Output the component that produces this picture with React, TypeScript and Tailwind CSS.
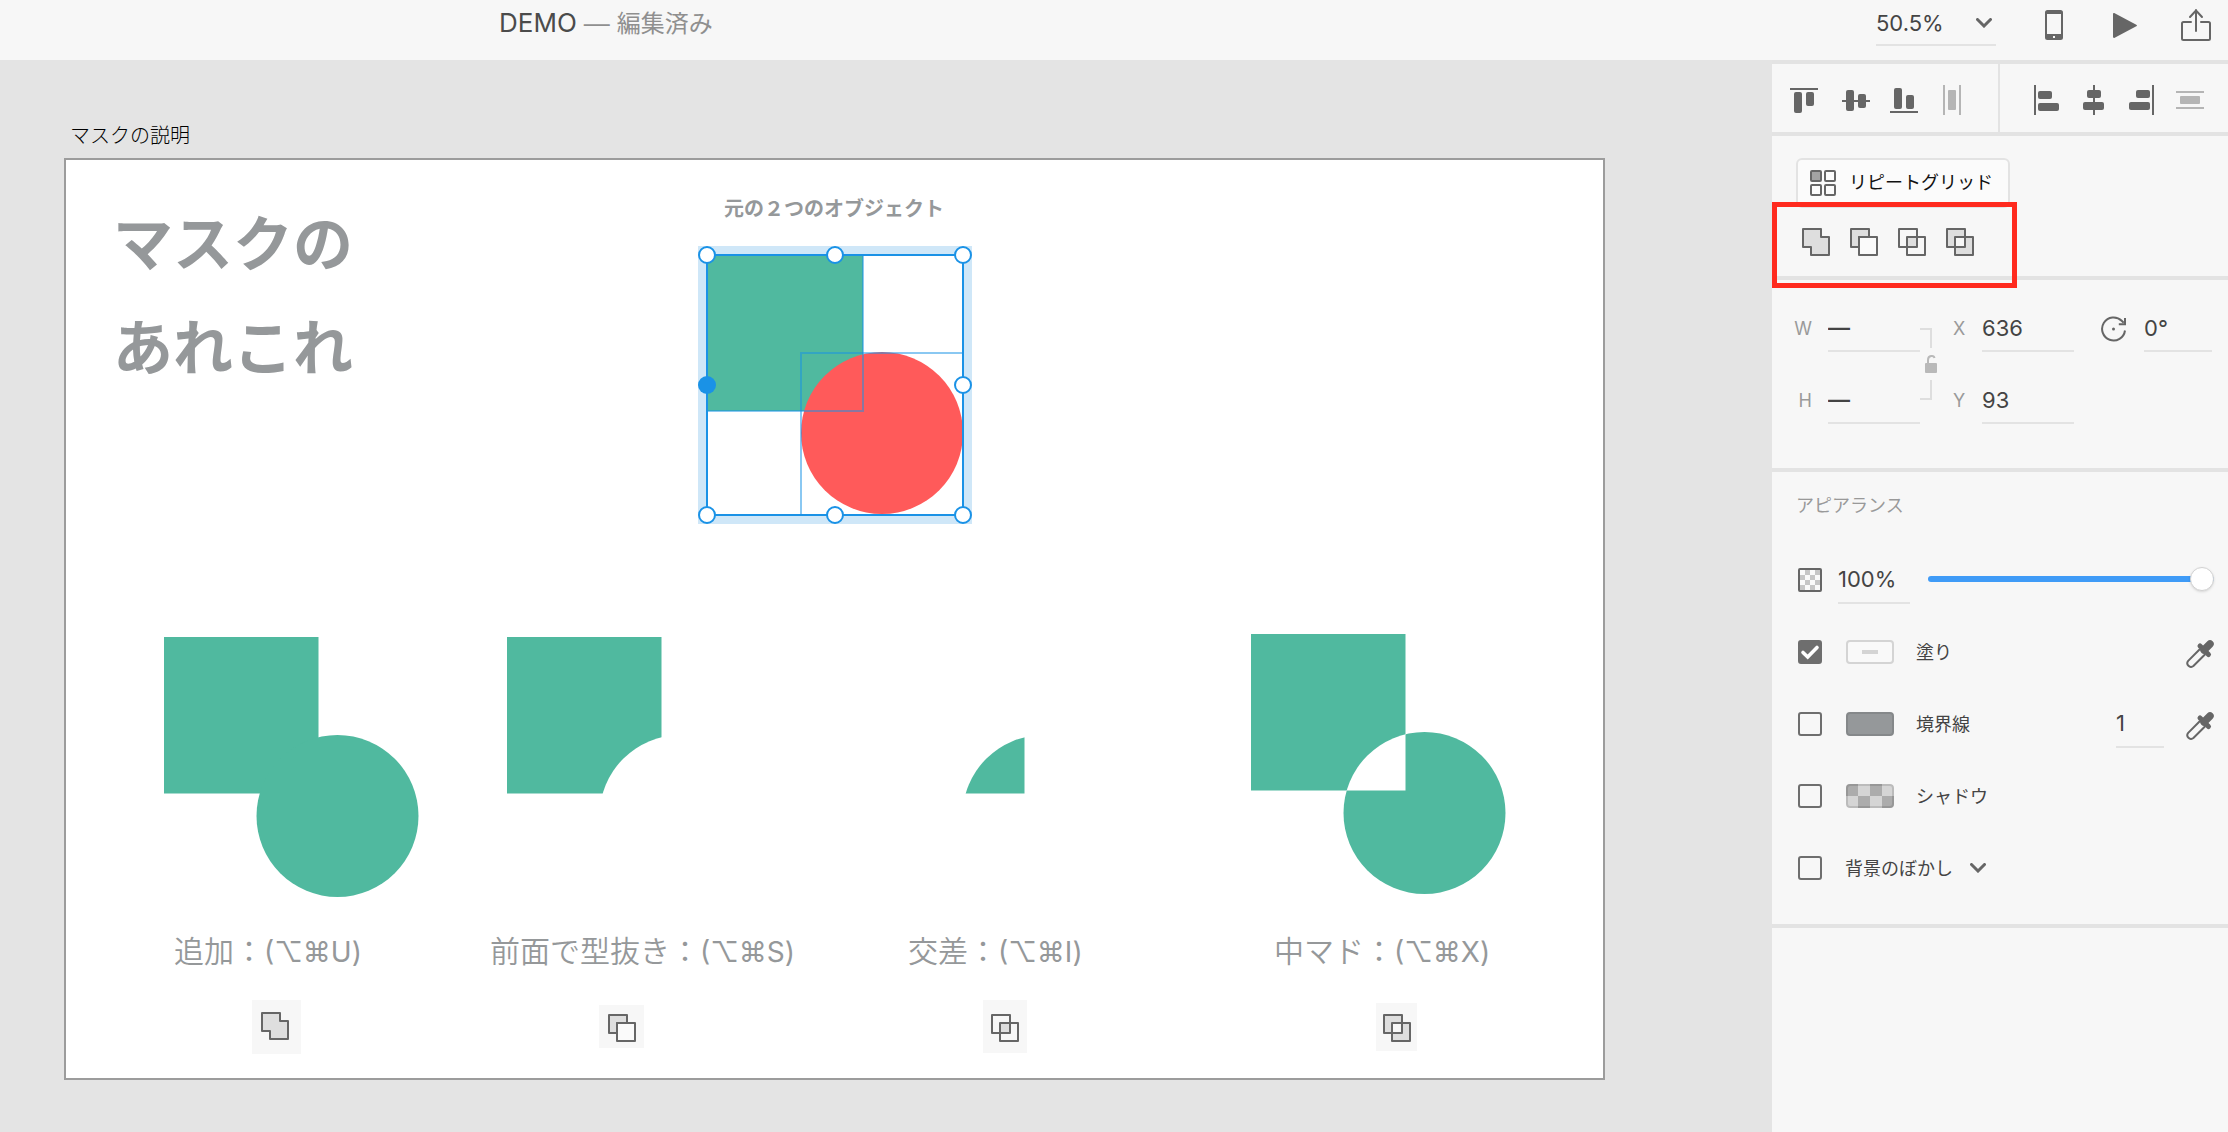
import { useState, type ReactNode } from "react";
import clsx from "clsx";

const GREEN = "#50b99f";
const INK = "#666666";

type BooleanOp = "add" | "subtract" | "intersect" | "exclude";

function BooleanIcon({ op }: { op: BooleanOp }) {
  const line = { stroke: INK, strokeWidth: 2, strokeLinejoin: "round" as const };
  return (
    <svg width="28" height="28" viewBox="0 0 28 28" aria-hidden="true">
      {op === "add" && <path d="M1 1h18v8h8v18H9v-8H1z" fill="#dedede" {...line} />}
      {op === "subtract" && (
        <>
          <path d="M1 1h18v8H9v10H1z" fill="#dedede" {...line} />
          <path d="M9 9h18v18H9z" fill="#fafafa" {...line} />
        </>
      )}
      {op === "intersect" && (
        <>
          <path d="M9 9h10v10H9z" fill="#dedede" />
          <path d="M1 1h18v18H1zM9 9h18v18H9z" fill="none" {...line} />
        </>
      )}
      {op === "exclude" && (
        <path d="M1 1h18v18H1zM9 9h18v18H9z" fill="#dedede" fillRule="evenodd" {...line} />
      )}
    </svg>
  );
}

const ops: BooleanOp[] = ["add", "subtract", "intersect", "exclude"];
const opNames: Record<BooleanOp, string> = {
  add: "追加",
  subtract: "前面で型抜き",
  intersect: "交差",
  exclude: "中マド",
};

function OpShape({ op }: { op: BooleanOp }) {
  return (
    <svg width="256" height="262" viewBox="0 0 256 262" aria-hidden="true">
      <defs>
        <mask id="outside-circle">
          <rect width="256" height="262" fill="#fff" />
          <circle cx="173.5" cy="179" r="81" fill="#000" />
        </mask>
        <clipPath id="inside-square">
          <rect width="154.5" height="156.5" />
        </clipPath>
        <mask id="outside-square">
          <rect width="256" height="262" fill="#fff" />
          <rect width="154.5" height="156.5" fill="#000" />
        </mask>
      </defs>
      {op === "add" && (
        <>
          <rect width="154.5" height="156.5" fill={GREEN} />
          <circle cx="173.5" cy="179" r="81" fill={GREEN} />
        </>
      )}
      {op === "subtract" && (
        <rect width="154.5" height="156.5" fill={GREEN} mask="url(#outside-circle)" />
      )}
      {op === "intersect" && (
        <circle cx="173.5" cy="179" r="81" fill={GREEN} clipPath="url(#inside-square)" />
      )}
      {op === "exclude" && (
        <>
          <rect width="154.5" height="156.5" fill={GREEN} mask="url(#outside-circle)" />
          <circle cx="173.5" cy="179" r="81" fill={GREEN} mask="url(#outside-square)" />
        </>
      )}
    </svg>
  );
}

const samples: { op: BooleanOp; keys: string; shape: string; label: string; badge: string }[] = [
  {
    op: "add",
    keys: "(⌥⌘U)",
    shape: "left-[98px] top-[477px]",
    label: "left-[108px]",
    badge: "left-[186px] top-[840px] h-[54px] w-[49px] pb-0.5 pr-1",
  },
  {
    op: "subtract",
    keys: "(⌥⌘S)",
    shape: "left-[441px] top-[477px]",
    label: "left-[424px]",
    badge: "left-[533px] top-[845px] h-[43px] w-[45px] pt-0.5",
  },
  {
    op: "intersect",
    keys: "(⌥⌘I)",
    shape: "left-[804px] top-[477px]",
    label: "left-[842px]",
    badge: "left-[917px] top-[840px] h-[53px] w-[44px] pt-0.5",
  },
  {
    op: "exclude",
    keys: "(⌥⌘X)",
    shape: "left-[1185px] top-[474px]",
    label: "left-[1208px]",
    badge: "left-[1310px] top-[843px] h-[48px] w-[41px] pt-0.5",
  },
];

function Selection() {
  const handles = [
    [9, 9], [137, 9], [265, 9], [265, 139], [265, 269], [137, 269], [9, 269],
  ];
  return (
    <svg width="274" height="278" viewBox="0 0 274 278" role="img" aria-label="選択中の四角形と円">
      <rect width="274" height="278" fill="#cfe7f8" />
      <rect x="9" y="9" width="256" height="260" fill="#fff" />
      <rect x="9" y="9" width="156" height="156" fill={GREEN} />
      <circle cx="184" cy="187" r="81" fill="#ff5a5a" />
      <g fill="none" stroke="#1592e6" strokeWidth="2" strokeOpacity="0.5">
        <path d="M165 10v155H10" />
        <path d="M264 107H103v161" />
      </g>
      <rect x="9" y="9" width="256" height="260" fill="none" stroke="#1a92e6" strokeWidth="2" />
      {handles.map(([x, y]) => (
        <circle key={`${x}-${y}`} cx={x} cy={y} r="8" fill="#fff" stroke="#1a92e6" strokeWidth="2" />
      ))}
      <circle cx="9" cy="139" r="9" fill="#1a92e6" />
    </svg>
  );
}

function Chevron({ className }: { className?: string }) {
  return (
    <svg className={className} width="16" height="10" viewBox="0 0 16 10" aria-hidden="true">
      <path d="M1.5 1.5 8 8l6.500-6.500" fill="none" stroke={INK} strokeWidth="3" strokeLinecap="round" />
    </svg>
  );
}

function TopBar() {
  const [zoom, setZoom] = useState("50.5%");
  return (
    <header className="flex h-15 shrink-0 items-start bg-[#f7f7f7] pr-[17px]">
      <h1 className="flex items-baseline gap-[7px] pt-[3px] pl-[499px] text-2xl leading-10 text-[#8f8f8f]">
        <span className="text-[26px] text-[#4b4b4b]">DEMO</span>
        <span className="font-['Liberation_Sans',sans-serif] text-[26px]">—</span>
        <span>編集済み</span>
      </h1>
      <div className="relative mt-0.5 ml-auto">
        <select
          aria-label="ズーム"
          value={zoom}
          onChange={(e) => setZoom(e.target.value)}
          className="h-11 w-[120px] appearance-none border-b-2 border-[#e3e3e3] bg-transparent text-[22px] text-[#444444]"
        >
          <option>50.5%</option>
          <option>100%</option>
          <option>200%</option>
        </select>
        <Chevron className="pointer-events-none absolute top-4 right-1" />
      </div>
      <button aria-label="モバイルプレビュー" className="mt-2.5 ml-[49px]">
        <svg width="18" height="30" viewBox="0 0 18 30">
          <path
            fill={INK}
            fillRule="evenodd"
            d="M2.500 0h13A2.500 2.500 0 0 1 18 2.500v25a2.500 2.500 0 0 1-2.500 2.500h-13A2.500 2.500 0 0 1 0 27.500v-25A2.500 2.500 0 0 1 2.500 0zM2 4v20h14V4zM8 26v2h2v-2z"
          />
        </svg>
      </button>
      <button aria-label="プレビュー" className="mt-[13px] ml-[50px]">
        <svg width="24" height="25" viewBox="0 0 24 25">
          <path d="M0 1.200C0 .2.800-.2 1.700.3l21.600 11.500c.9.500.9 1 0 1.500L1.700 24.700C.8 25.200 0 24.800 0 23.800z" fill={INK} />
        </svg>
      </button>
      <button aria-label="共有" className="mt-2 ml-[44px]">
        <svg width="30" height="33" viewBox="0 0 30 33">
          <path
            d="M10 14H2.500a1.500 1.500 0 0 0-1.500 1.500v15A1.500 1.500 0 0 0 2.500 32h25a1.500 1.500 0 0 0 1.500-1.500v-15a1.500 1.500 0 0 0-1.500-1.500H20M15 23V2M9 9l6-6.500L21 9"
            fill="none"
            stroke={INK}
            strokeWidth="2"
            strokeLinecap="round"
          />
        </svg>
      </button>
    </header>
  );
}

function Artboard() {
  return (
    <main className="min-w-0 flex-1 overflow-hidden bg-[#e4e4e4] pt-[62px] pl-16">
      <p className="mb-2 pl-1.5 text-xl leading-7 font-light text-black">マスクの説明</p>
      <section className="relative h-[922px] w-[1541px] border-2 border-[#9c9c9c] bg-white text-[#95989a]">
        <h2 className="absolute top-8 left-[47px] text-[60px] leading-[104px] font-bold">
          マスクの
          <br />
          あれこれ
        </h2>
        <p className="absolute top-[35px] left-[658px] text-xl leading-7 font-bold">
          元の２つのオブジェクト
        </p>
        <div className="absolute top-[86px] left-[632px]">
          <Selection />
        </div>
        {samples.map((s) => (
          <div key={s.op}>
            <div className={clsx("absolute", s.shape)}>
              <OpShape op={s.op} />
            </div>
            <p
              className={clsx(
                "absolute top-[769px] font-['Noto_Sans_CJK_JP',sans-serif] text-[30px] leading-10 font-[350] whitespace-nowrap",
                s.label,
              )}
            >
              {opNames[s.op]}：<span className="font-[Inter,sans-serif] text-[28px] font-normal">{s.keys}</span>
            </p>
            <div className={clsx("absolute flex items-center justify-center bg-[#f7f7f7]", s.badge)}>
              <BooleanIcon op={s.op} />
            </div>
          </div>
        ))}
      </section>
    </main>
  );
}

function AlignButton({ label, muted, className, children }: { label: string; muted?: boolean; className?: string; children: ReactNode }) {
  return (
    <button aria-label={label} className={className}>
      <svg width="30" height="30" viewBox="0 0 30 30" fill={muted ? "#b5b5b5" : INK}>
        {children}
      </svg>
    </button>
  );
}

function AlignRow() {
  return (
    <section className="flex h-[68px] gap-0.5">
      <div className="flex w-[226px] items-start gap-[18px] bg-[#f7f7f7] pt-[21px] pl-[17px]">
        <AlignButton label="上揃え" className="mr-1">
          <rect x="1" y="3" width="28" height="2" />
          <rect x="5" y="7" width="8" height="21" rx="2" />
          <rect x="17" y="7" width="8" height="14" rx="2" />
        </AlignButton>
        <AlignButton label="中央揃え（垂直方向）">
          <rect x="1" y="15" width="28" height="2" />
          <rect x="5" y="5" width="8" height="21" rx="2" />
          <rect x="17" y="9" width="8" height="14" rx="2" />
        </AlignButton>
        <AlignButton label="下揃え">
          <rect x="1" y="26" width="28" height="2" />
          <rect x="5" y="3" width="8" height="21" rx="2" />
          <rect x="17" y="10" width="8" height="14" rx="2" />
        </AlignButton>
        <AlignButton label="水平方向に分布" muted>
          <rect x="6" width="2" height="30" />
          <rect x="22" width="2" height="30" />
          <rect x="11" y="5" width="8" height="20" rx="1" />
        </AlignButton>
      </div>
      <div className="flex flex-1 items-start gap-[18px] bg-[#f7f7f7] pt-[21px] pl-[31px]">
        <AlignButton label="左揃え">
          <rect x="3" width="2" height="30" />
          <rect x="7" y="6" width="14" height="8" rx="2" />
          <rect x="7" y="18" width="21" height="8" rx="2" />
        </AlignButton>
        <AlignButton label="中央揃え（水平方向）">
          <rect x="14" width="2" height="30" />
          <rect x="8" y="5" width="14" height="8" rx="2" />
          <rect x="4" y="17" width="21" height="8" rx="2" />
        </AlignButton>
        <AlignButton label="右揃え">
          <rect x="25" width="2" height="30" />
          <rect x="9" y="5" width="14" height="8" rx="2" />
          <rect x="2" y="17" width="21" height="8" rx="2" />
        </AlignButton>
        <AlignButton label="垂直方向に分布" muted>
          <rect x="1" y="6" width="28" height="2" />
          <rect x="1" y="22" width="28" height="2" />
          <rect x="5" y="11" width="20" height="8" rx="1" />
        </AlignButton>
      </div>
    </section>
  );
}

function CombineSection() {
  return (
    <section className="relative h-[140px] bg-[#f7f7f7] pt-[22px] pl-6">
      <button className="flex h-[50px] w-[214px] items-center gap-[13px] rounded-md border-2 border-[#e3e3e3] bg-[#fbfbfb] pl-3 text-lg text-[#111111]">
        <svg width="26" height="26" viewBox="0 0 26 26" aria-hidden="true" fill="none" stroke={INK} strokeWidth="2">
          <rect x="1" y="1" width="10" height="10" rx="1" fill="#a3a3a3" />
          <rect x="15" y="1" width="10" height="10" rx="1" />
          <rect x="1" y="15" width="10" height="10" rx="1" />
          <rect x="15" y="15" width="10" height="10" rx="1" />
        </svg>
        リピートグリッド
      </button>
      <div className="mt-5 flex gap-5 pl-1.5">
        {ops.map((op) => (
          <button key={op} aria-label={opNames[op]}>
            <BooleanIcon op={op} />
          </button>
        ))}
      </div>
      <div className="pointer-events-none absolute top-[66px] left-0 z-10 h-[86px] w-[245px] border-5 border-[#ff2a1e]" />
    </section>
  );
}

function Field({ id, label, value, name, className }: { id: string; label: ReactNode; value: string; name?: string; className: string }) {
  return (
    <div className="flex items-center">
      <label htmlFor={id} className="shrink-0 text-lg text-[#9a9a9a]">
        {label}
      </label>
      <input
        id={id}
        aria-label={name}
        defaultValue={value}
        className={clsx("h-[46px] border-b-2 border-[#e3e3e3] bg-transparent text-[22px] text-[#444444] outline-none", className)}
      />
    </div>
  );
}

function TransformSection() {
  return (
    <section className="flex h-[188px] bg-[#f7f7f7] pt-[26px] pl-6">
      <div className="flex flex-col gap-[26px]">
        <Field id="w" label={<span className="flex w-8 justify-end pr-4">W</span>} value="—" className="w-[92px] font-['Liberation_Sans',sans-serif] font-bold" />
        <Field id="h" label={<span className="flex w-8 justify-end pr-4">H</span>} value="—" className="w-[92px] font-['Liberation_Sans',sans-serif] font-bold" />
      </div>
      <button aria-label="縦横比を固定" className="mt-[22px] mr-[13px] self-start">
        <svg width="20" height="72" viewBox="0 0 20 72" fill="none">
          <path d="M0 1h11v19M11 52v19H0" stroke="#dedede" strokeWidth="2" />
          <path d="M8 36v-4c0-5 6-5 6.500-2" stroke="#b9b9b9" strokeWidth="2" />
          <rect x="5" y="35" width="12" height="10" rx="1" fill="#b9b9b9" />
        </svg>
      </button>
      <div className="flex flex-col gap-[26px]">
        <Field id="x" label={<span className="block w-[29px]">X</span>} value="636" className="w-[92px]" />
        <Field id="y" label={<span className="block w-[29px]">Y</span>} value="93" className="w-[92px]" />
      </div>
      <div className="ml-[26px]">
        <Field
          id="rotation"
          name="回転"
          label={
            <span className="block w-11">
              <svg width="28" height="28" viewBox="0 0 28 28" fill="none" stroke={INK} strokeWidth="2" aria-hidden="true">
                <path d="M25 15.500a11.500 11.500 0 1 1-3.300-9.700l2 2" />
                <path d="M18.800 9.300h6.200V3" />
                <circle cx="13.500" cy="14" r="1.500" fill={INK} stroke="none" />
              </svg>
            </span>
          }
          value="0°"
          className="w-[68px]"
        />
      </div>
    </section>
  );
}

function Eyedropper() {
  return (
    <button aria-label="スポイト" className="pt-1">
      <svg width="28" height="28" viewBox="0 0 28 28" fill="none" stroke={INK} strokeLinecap="round">
        <path d="M13.500 9.500 2.200 20.800a3.700 3.700 0 0 0 5.200 5.200L18.700 14.700" strokeWidth="2" />
        <path d="M14 6l8.500 8.500" strokeWidth="5" />
        <path d="M18 10l6-6" strokeWidth="7.500" />
      </svg>
    </button>
  );
}

function CheckRow({ id, label, checked, swatch, children }: { id: string; label: string; checked?: boolean; swatch?: ReactNode; children?: ReactNode }) {
  const [on, setOn] = useState(!!checked);
  return (
    <div className="flex h-[72px] items-center">
      <span className="relative mr-[23px] size-6 shrink-0">
        <input
          id={id}
          type="checkbox"
          checked={on}
          onChange={(e) => setOn(e.target.checked)}
          className="block size-6 appearance-none rounded-[3px] border-2 border-[#6e6e6e] checked:bg-[#6e6e6e]"
        />
        {on && (
          <svg className="pointer-events-none absolute inset-0" width="24" height="24" viewBox="0 0 24 24" aria-hidden="true">
            <path d="m5 12.500 4.700 4.500L19 7.500" fill="none" stroke="#fff" strokeWidth="3.600" strokeLinecap="round" />
          </svg>
        )}
      </span>
      {swatch && <span className="mr-[22px] ml-px flex">{swatch}</span>}
      <label htmlFor={id} className="pt-0.5 text-lg text-[#444444]">
        {label}
      </label>
      {children}
    </div>
  );
}

function AppearanceSection() {
  return (
    <section className="h-[452px] bg-[#f7f7f7] pr-3.5 pl-[26px]">
      <h2 className="h-[72px] pt-5 -ml-0.5 text-lg leading-7 text-[#999999]">アピアランス</h2>
      <div className="flex h-[72px] items-center">
        <svg className="mr-4 shrink-0" width="24" height="24" viewBox="0 0 24 24" aria-hidden="true">
          <rect x="1" y="1" width="22" height="22" rx="1" fill="#fafafa" stroke={INK} strokeWidth="2" />
          <path
            d="M7 2h5v5H7zM17 2h5v5h-5zM2 7h5v5H2zM12 7h5v5h-5zM7 12h5v5H7zM17 12h5v5h-5zM2 17h5v5H2zM12 17h5v5h-5z"
            fill="#c6c6c6"
          />
        </svg>
        <input
          aria-label="不透明度"
          defaultValue="100%"
          className="h-12 w-[72px] border-b-2 border-[#e3e3e3] bg-transparent text-[22px] text-[#444444] outline-none"
        />
        <input
          type="range"
          aria-label="不透明度スライダー"
          defaultValue={100}
          className="mb-0.5 ml-[18px] h-6 min-w-0 flex-1 appearance-none bg-transparent [&::-webkit-slider-runnable-track]:h-1.5 [&::-webkit-slider-runnable-track]:rounded-full [&::-webkit-slider-runnable-track]:bg-[#3f9bf7] [&::-webkit-slider-thumb]:-mt-[9px] [&::-webkit-slider-thumb]:size-6 [&::-webkit-slider-thumb]:appearance-none [&::-webkit-slider-thumb]:rounded-full [&::-webkit-slider-thumb]:border [&::-webkit-slider-thumb]:border-[#d2d2d2] [&::-webkit-slider-thumb]:bg-white [&::-webkit-slider-thumb]:shadow-sm"
        />
      </div>
      <CheckRow
        id="fill"
        label="塗り"
        checked
        swatch={
          <button aria-label="塗りの色" className="flex h-6 w-12 items-center justify-center rounded border-2 border-[#d4d4d4] bg-[#f9f9f9]">
            <span className="h-1 w-4 bg-[#d4d4d4]" />
          </button>
        }
      >
        <span className="ml-auto flex">
          <Eyedropper />
        </span>
      </CheckRow>
      <CheckRow
        id="stroke"
        label="境界線"
        swatch={<button aria-label="境界線の色" className="h-6 w-12 rounded border-2 border-[#85888a] bg-[#95989a]" />}
      >
        <input
          aria-label="線幅"
          defaultValue="1"
          className="mr-[22px] ml-auto h-12 w-12 border-b-2 border-[#e3e3e3] bg-transparent text-[22px] text-[#444444] outline-none"
        />
        <Eyedropper />
      </CheckRow>
      <CheckRow
        id="shadow"
        label="シャドウ"
        swatch={
          <button aria-label="シャドウの色" className="h-6 w-12 overflow-hidden rounded">
            <svg width="48" height="24" viewBox="0 0 48 24">
              <rect width="48" height="24" fill="#d5d5d5" />
              <path d="M0 0h12v12H0zM24 0h12v12H24zM12 12h12v12H12zM36 12h12v12H36z" fill="#acacac" />
              <rect x="1" y="1" width="46" height="22" rx="3" fill="none" stroke="#000" strokeOpacity="0.12" strokeWidth="2" />
            </svg>
          </button>
        }
      />
      <CheckRow id="blur" label="背景のぼかし">
        <button aria-label="ぼかしの種類" className="ml-[17px]">
          <Chevron />
        </button>
      </CheckRow>
    </section>
  );
}

export default function App() {
  return (
    <div className="flex min-h-screen flex-col bg-[#e4e4e4] font-[Inter,'Noto_Sans_CJK_JP',sans-serif]">
      <TopBar />
      <div className="flex flex-1">
        <Artboard />
        <aside className="flex w-[456px] shrink-0 flex-col gap-1 bg-[#e3e3e3] pt-1">
          <AlignRow />
          <CombineSection />
          <TransformSection />
          <AppearanceSection />
          <div className="flex-1 bg-[#f7f7f7]" />
        </aside>
      </div>
    </div>
  );
}
